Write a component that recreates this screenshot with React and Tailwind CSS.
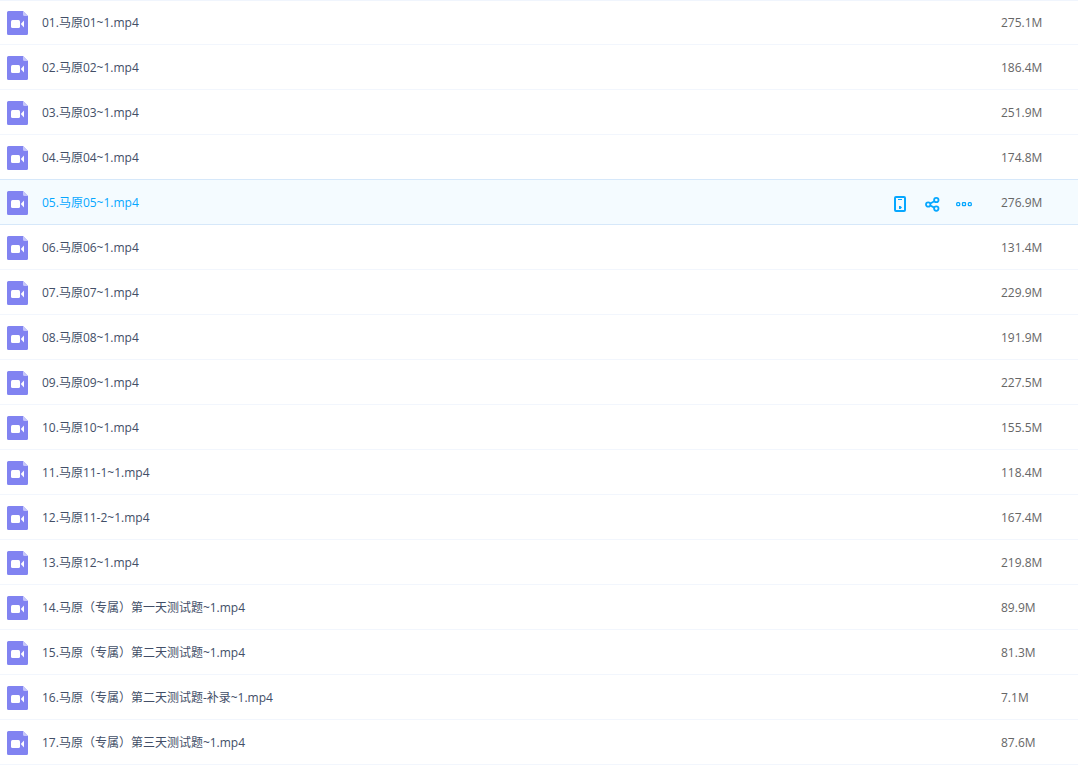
import React from "react";
import clsx from "clsx";

const files = [
  { name: "01.马原01~1.mp4", size: "275.1M" },
  { name: "02.马原02~1.mp4", size: "186.4M" },
  { name: "03.马原03~1.mp4", size: "251.9M" },
  { name: "04.马原04~1.mp4", size: "174.8M" },
  { name: "05.马原05~1.mp4", size: "276.9M" },
  { name: "06.马原06~1.mp4", size: "131.4M" },
  { name: "07.马原07~1.mp4", size: "229.9M" },
  { name: "08.马原08~1.mp4", size: "191.9M" },
  { name: "09.马原09~1.mp4", size: "227.5M" },
  { name: "10.马原10~1.mp4", size: "155.5M" },
  { name: "11.马原11-1~1.mp4", size: "118.4M" },
  { name: "12.马原11-2~1.mp4", size: "167.4M" },
  { name: "13.马原12~1.mp4", size: "219.8M" },
  { name: "14.马原（专属）第一天测试题~1.mp4", size: "89.9M" },
  { name: "15.马原（专属）第二天测试题~1.mp4", size: "81.3M" },
  { name: "16.马原（专属）第二天测试题-补录~1.mp4", size: "7.1M" },
  { name: "17.马原（专属）第三天测试题~1.mp4", size: "87.6M" },
];

const ACTIVE_INDEX = 4;

const VideoFileIcon = () => (
  <svg width="21" height="24" viewBox="0 0 21 24" className="shrink-0" aria-hidden="true">
    <path d="M1.5 0H16l5 5v17.5a1.5 1.5 0 0 1-1.5 1.5h-18A1.5 1.5 0 0 1 0 22.5v-21A1.5 1.5 0 0 1 1.5 0Z" fill="#8183f1" />
    <path d="M16 0l5 5h-3.5A1.5 1.5 0 0 1 16 3.500Z" fill="#c5c6fa" />
    <rect x="4" y="9" width="9" height="8" rx="1.5" fill="#fff" />
    <path d="M13.8 12.9L17 9.600v7Z" fill="#fff" />
  </svg>
);

const PhoneIcon = () => (
  <svg width="12" height="16" viewBox="0 0 12 16" fill="none" aria-hidden="true">
    <rect x="1" y="1" width="10" height="14" rx="1" stroke="currentColor" strokeWidth="2" />
    <path d="M4 3.5h4" stroke="currentColor" />
    <path d="M5 10h1.500l1.500 1.500L6.500 13H5Z" fill="currentColor" />
  </svg>
);

const ShareIcon = () => (
  <svg width="15" height="16" viewBox="0 0 15 16" fill="none" stroke="currentColor" strokeWidth="1.8" aria-hidden="true">
    <circle cx="3.200" cy="8.500" r="2.200" />
    <circle cx="11.300" cy="4" r="2.200" />
    <circle cx="11.300" cy="12.600" r="2.200" />
    <path d="M5.300 7.500l4-2.300M5.300 9.500l4 2.100" />
  </svg>
);

const MoreIcon = () => (
  <svg width="16" height="16" viewBox="0 0 16 16" fill="none" stroke="currentColor" strokeWidth="1.3" aria-hidden="true">
    <rect x="0.700" y="6.700" width="3" height="3" rx="1" />
    <rect x="6.500" y="6.700" width="3" height="3" rx="0.500" />
    <rect x="12.300" y="6.700" width="3" height="3" rx="1" />
  </svg>
);

const RowActions = () => (
  <div className="flex items-center justify-end pr-[29px] pt-1 text-[#06a7ff]">
    <button type="button" aria-label="保存到设备" className="mr-[19px]">
      <PhoneIcon />
    </button>
    <button type="button" aria-label="分享" className="mr-4">
      <ShareIcon />
    </button>
    <button type="button" aria-label="更多">
      <MoreIcon />
    </button>
  </div>
);

const FileRow = ({ file, active, beforeActive }) => {
  const cell = clsx(
    "h-[45px] border-b p-0",
    active && "bg-[#f4fbff]",
    active || beforeActive ? "border-[#d6e8fa]" : "border-[#f2f6fd]"
  );

  return (
    <tr>
      <td className={cell}>
        <div className="flex items-center gap-3.5 pl-[7px]">
          <div className="pt-0.5">
            <VideoFileIcon />
          </div>
          <a href="#" className={clsx("pt-0.5", active ? "text-[#06a7ff]" : "text-[#424e67]")}>
            {file.name}
          </a>
        </div>
      </td>
      <td className={cell}>{active && <RowActions />}</td>
      <td className={clsx(cell, "text-[#666]")}>
        <div className="pt-0.5">{file.size}</div>
      </td>
    </tr>
  );
};

const App = () => (
  <main className="bg-white font-['Open_Sans','Noto_Sans_CJK_SC',sans-serif] text-[12px] leading-4">
    <table className="w-full table-fixed border-separate border-spacing-0 shadow-[inset_0_1px_#f0f5fd]">
      <colgroup>
        <col />
        <col className="w-48" />
        <col className="w-[77px]" />
      </colgroup>
      <tbody>
        {files.map((file, index) => (
          <FileRow
            key={file.name}
            file={file}
            active={index === ACTIVE_INDEX}
            beforeActive={index === ACTIVE_INDEX - 1}
          />
        ))}
      </tbody>
    </table>
  </main>
);

export default App;
